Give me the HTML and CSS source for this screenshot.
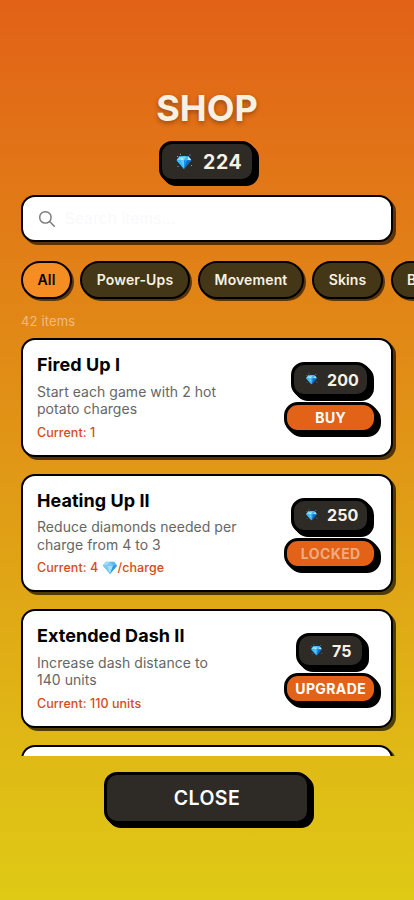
FILE: index.html
```html
<!DOCTYPE html>
<html lang="en">
<head>
<meta charset="utf-8">
<meta name="viewport" content="width=device-width, initial-scale=1">
<title>Shop</title>
<link rel="stylesheet" href="styles.css">
</head>
<body>
<svg class="defs" aria-hidden="true">
  <symbol id="gem" viewBox="0 0 20 18">
    <path fill="#198fe8" d="M4.2 1h11.6L20 6.2 10 18 0 6.2z"/>
    <path fill="#76dcff" d="M4.2 1 0 6.2h5.6L7.5 2zM7 1l3 5.2L13.2 1z"/>
    <path fill="#b6efff" d="m7 1-1.4 5.2H10zM15.8 1l-1.4 5.2H20z"/>
    <path fill="#42baf7" d="M13.2 1 10 6.2h4.4L15.8 1zM0 6.2h5.6L10 18z"/>
    <path fill="#66ccfb" d="M5.6 6.2H10V18z"/>
    <path fill="#1268ca" d="M14.4 6.2H20L10 18z"/>
  </symbol>
  <symbol id="softgem" viewBox="0 0 20 18">
    <path fill="#55b9ee" d="M4.2 1h11.6L20 6.2 10 18 0 6.2z"/>
    <path fill="#a4def6" d="M4.2 1 0 6.2h5.6L10 1zM5.6 6.2h8.8L10 18z"/>
    <path fill="#7acbf1" d="m10 1-4.4 5.2h8.8zM0 6.2h5.6L10 18z"/>
    <path fill="#3399dc" d="M14.4 6.2H20L10 18z"/>
  </symbol>
  <symbol id="sparkgem" viewBox="0 0 18 18">
    <use href="#gem" x="1.500" y="2.500" width="15" height="13.500"/>
    <path fill="#55b9ee" d="M2 3h1v1H2zM14.5 1.500h1v1h-1zM5 .8h1v1H5zM16 12h1v1h-1zM2.500 13h1v1h-1z"/>
  </symbol>
</svg>
<main class="shop">
  <h1 class="title">SHOP</h1>
  <div class="balance raised"><svg class="balance-gem"><use href="#sparkgem"/></svg><span>224</span></div>
  <div class="search">
    <svg class="search-icon" viewBox="0 0 16 16"><circle cx="6.400" cy="6.400" r="5.700"/><path d="m10.600 10.600 4.700 4.700"/></svg>
    <span class="placeholder">Search items...</span>
  </div>
  <nav class="chips">
    <span class="chip chip-all">All</span>
    <span class="chip chip-power">Power-Ups</span>
    <span class="chip chip-move">Movement</span>
    <span class="chip chip-skins">Skins</span>
    <span class="chip chip-more">B</span>
  </nav>
  <p class="count">42 items</p>
  <section class="list">
    <article class="card">
      <div class="info">
        <h2>Fired Up I</h2>
        <p class="desc">Start each game with 2 hot<br>potato charges</p>
        <p class="current">Current: 1</p>
      </div>
      <div class="buybox">
        <div class="price raised"><svg class="price-gem"><use href="#sparkgem"/></svg><span>200</span></div>
        <div class="action raised">BUY</div>
      </div>
    </article>
    <article class="card">
      <div class="info">
        <h2>Heating Up II</h2>
        <p class="desc">Reduce diamonds needed per<br>charge from 4 to 3</p>
        <p class="current">Current: 4 <svg class="inline-gem"><use href="#softgem"/></svg>/charge</p>
      </div>
      <div class="buybox">
        <div class="price raised"><svg class="price-gem"><use href="#sparkgem"/></svg><span>250</span></div>
        <div class="action locked raised">LOCKED</div>
      </div>
    </article>
    <article class="card">
      <div class="info">
        <h2>Extended Dash II</h2>
        <p class="desc">Increase dash distance to<br>140 units</p>
        <p class="current">Current: 110 units</p>
      </div>
      <div class="buybox">
        <div class="price price-short raised"><svg class="price-gem"><use href="#sparkgem"/></svg><span>75</span></div>
        <div class="action upgrade raised">UPGRADE</div>
      </div>
    </article>
    <article class="card"></article>
  </section>
  <div class="close raised">CLOSE</div>
</main>
</body>
</html>
```

FILE: styles.css
```css
* { box-sizing: border-box; }
body {
  margin: 0;
  font-family: Inter, "Liberation Sans", sans-serif;
}
h1, h2, p { margin: 0; }
.defs { position: absolute; width: 0; height: 0; }
.shop {
  height: 900px;
  padding-top: 87px;
  display: flex;
  flex-direction: column;
  align-items: center;
  overflow: hidden;
  background: linear-gradient(#e26217, #dfca15);
}
.shop > * { flex-shrink: 0; }
.title {
  height: 42px;
  line-height: 42px;
  font-size: 36px;
  font-weight: 700;
  letter-spacing: 0;
  color: #f7f1e4;
  text-shadow: 0 2px 5px rgba(0, 0, 0, .35);
}
.raised {
  border: 3px solid #000;
  background: #2e2a25;
  color: #f7f1e4;
  box-shadow: 1px 1px #000, 2px 2px #000, 3px 3px #000, 4px 4px #000;
  display: flex;
  align-items: center;
}
.balance {
  width: 96px;
  height: 41px;
  margin: 12px 0 0;
  padding-left: 13px;
  border-radius: 13px;
  gap: 10px;
  font-size: 19.5px;
  font-weight: 700;
  letter-spacing: .6px;
}
.balance-gem { width: 18px; height: 18px; }
.search {
  width: 372px;
  height: 47px;
  margin-top: 13px;
  padding-left: 16px;
  border: 2px solid #000;
  border-radius: 14px;
  background: #fff;
  box-shadow: 3px 3px rgba(0, 0, 0, .6);
  display: flex;
  align-items: center;
  gap: 10px;
}
.search-icon { width: 16px; height: 16px; fill: none; stroke: #777; stroke-width: 1.400; stroke-linecap: round; }
.placeholder { font-size: 15.5px; letter-spacing: .1px; color: #f9f9fb; }
.chips {
  width: 100%;
  margin-top: 19px;
  padding-left: 21px;
  display: flex;
  gap: 8px;
  overflow: hidden;
  padding-bottom: 3px;
}
.chip {
  flex: none;
  height: 38px;
  border: 2px solid #000;
  border-radius: 19px;
  background: #433717;
  color: #f7f1e4;
  box-shadow: 2px 2px rgba(0, 0, 0, .6);
  font-size: 14px;
  font-weight: 600;
  letter-spacing: .12px;
  line-height: 34px;
  text-align: center;
}
.chip-all { width: 51px; background: #f68d23; color: #000; }
.chip-power { width: 110px; }
.chip-move { width: 106px; }
.chip-skins { width: 71px; }
.chip-more { width: 80px; padding-left: 14px; text-align: left; }
.count {
  width: 372px;
  height: 18px;
  margin-top: 10px;
  line-height: 18px;
  font-size: 13px;
  letter-spacing: .15px;
  color: rgba(247, 241, 228, .52);
}
.list {
  width: 100%;
  height: 426px;
  padding: 8px 21px 0;
  overflow: hidden;
}
.card {
  height: 118.5px;
  margin-bottom: 17px;
  padding: 14px;
  border: 2px solid #000;
  border-radius: 14px;
  background: #fff;
  box-shadow: 3px 3px rgba(0, 0, 0, .65);
  display: flex;
  justify-content: space-between;
}
.card h2 { font-size: 18px; line-height: 22px; font-weight: 700; letter-spacing: .05px; color: #000; }
.desc { margin-top: 6.5px; font-size: 14px; line-height: 17.5px; letter-spacing: .04px; color: #666; white-space: nowrap; }
.current { margin-top: 7px; font-size: 12.5px; line-height: 15px; font-weight: 500; letter-spacing: .05px; color: #d94a20; white-space: nowrap; }
.inline-gem { width: 16px; height: 13px; vertical-align: -2px; }
.buybox {
  width: 93px;
  padding-top: 8px;
  display: flex;
  flex-direction: column;
  align-items: center;
  gap: 5px;
}
.price {
  width: 79px;
  height: 35px;
  padding-left: 11px;
  gap: 9px;
  border-radius: 13px;
  font-size: 16px;
  font-weight: 700;
  letter-spacing: .1px;
}
.price-short { width: 69px; }
.price-gem { width: 13px; height: 13px; }
.action {
  width: 93px;
  height: 31px;
  justify-content: center;
  border-radius: 14px;
  background: #e26217;
  color: #fff;
  font-size: 14px;
  font-weight: 700;
  letter-spacing: .4px;
  text-indent: .4px;
}
.locked { color: #f0ac80; }
.close {
  width: 206px;
  height: 52px;
  margin-top: 16px;
  justify-content: center;
  border-radius: 13px;
  color: #fff;
  font-size: 19.5px;
  font-weight: 600;
  letter-spacing: .4px;
}
```
